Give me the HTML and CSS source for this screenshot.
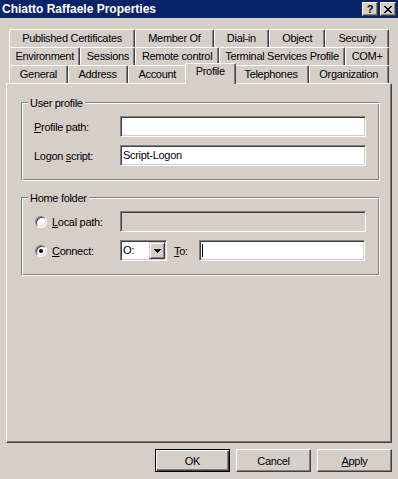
FILE: index.html
```html
<!DOCTYPE html>
<html lang="en">
<head>
    <meta charset="UTF-8">
    <meta name="viewport" content="width=device-width, initial-scale=1.0">
    <title>Chiatto Raffaele Properties</title>
    <link rel="stylesheet" href="styles.css">
</head>
<body>
    <div class="dialog">
        <div class="titlebar">
            <span class="title">Chiatto Raffaele Properties</span>
            <div class="caption-btns">
                <div class="caption-btn help">?</div>
                <div class="caption-btn">
                    <svg width="8" height="7" viewBox="0 0 8 7" shape-rendering="crispEdges"><path d="M0 0h2v1H0z M6 0h2v1H6z M1 1h2v1H1z M5 1h2v1H5z M2 2h4v1H2z M3 3h2v1H3z M2 4h4v1H2z M1 5h2v1H1z M5 5h2v1H5z M0 6h2v1H0z M6 6h2v1H6z" fill="#000"/></svg>
                </div>
            </div>
        </div>

        <div class="client">
            <div class="tabs">
                <div class="tab-row">
                    <div class="tab">Published Certificates</div>
                    <div class="tab">Member Of</div>
                    <div class="tab">Dial-in</div>
                    <div class="tab">Object</div>
                    <div class="tab">Security</div>
                </div>
                <div class="tab-row">
                    <div class="tab">Environment</div>
                    <div class="tab">Sessions</div>
                    <div class="tab">Remote control</div>
                    <div class="tab">Terminal Services Profile</div>
                    <div class="tab">COM+</div>
                </div>
                <div class="tab-row">
                    <div class="tab">General</div>
                    <div class="tab">Address</div>
                    <div class="tab">Account</div>
                    <div class="tab active">Profile</div>
                    <div class="tab">Telephones</div>
                    <div class="tab">Organization</div>
                </div>
            </div>

            <div class="panel">
                <fieldset class="group">
                    <legend>User profile</legend>
                    <div class="field-row">
                        <label class="field-label"><u>P</u>rofile path:</label>
                        <div class="edit"></div>
                    </div>
                    <div class="field-row">
                        <label class="field-label">Logon <u>s</u>cript:</label>
                        <div class="edit">Script-Logon</div>
                    </div>
                </fieldset>

                <fieldset class="group">
                    <legend>Home folder</legend>
                    <div class="field-row">
                        <div class="radio-label"><span class="radio"></span><u>L</u>ocal path:</div>
                        <div class="edit disabled"></div>
                    </div>
                    <div class="field-row">
                        <div class="radio-label"><span class="radio checked"></span><u>C</u>onnect:</div>
                        <div class="combo">
                            <span class="combo-text">O:</span>
                            <span class="combo-btn">
                                <svg width="7" height="4" viewBox="0 0 7 4" shape-rendering="crispEdges"><path d="M0 0h7v1H0z M1 1h5v1H1z M2 2h3v1H2z M3 3h1v1H3z" fill="#000"/></svg>
                            </span>
                        </div>
                        <span class="to-label"><u>T</u>o:</span>
                        <div class="edit to"><span class="caret"></span></div>
                    </div>
                </fieldset>
            </div>

            <div class="buttons">
                <button class="btn default">OK</button>
                <button class="btn">Cancel</button>
                <button class="btn"><u>A</u>pply</button>
            </div>
        </div>
    </div>
</body>
</html>
```

FILE: styles.css
```css
body {
    margin: 0;
    background: #d4d0c8;
    font-family: "Liberation Sans", Arial, sans-serif;
    font-size: 11px;
    letter-spacing: -0.3px;
    color: #000;
}
.dialog {
    width: 398px;
    height: 479px;
    background: #d4d0c8;
    overflow: hidden;
}
.titlebar {
    height: 18px;
    box-sizing: border-box;
    padding: 0 2px;
    background: #0a246a;
    display: flex;
    align-items: center;
    justify-content: space-between;
}
.title {
    color: #fff;
    font-weight: bold;
    font-size: 12px;
    letter-spacing: 0;
}
.caption-btns {
    display: flex;
    gap: 2px;
}
.caption-btn {
    width: 16px;
    height: 14px;
    box-sizing: border-box;
    background: #d4d0c8;
    border: 1px solid;
    border-color: #fff #404040 #404040 #fff;
    box-shadow: inset -1px -1px #808080;
    display: flex;
    align-items: center;
    justify-content: center;
}
.help {
    font-weight: bold;
    font-size: 11px;
    line-height: 1;
    letter-spacing: 0;
}
.client {
    padding: 11px 6px 0;
}
.tabs {
    padding: 0 3px;
}
.tab-row {
    display: flex;
    height: 18px;
}
.tab {
    flex: 1 1 auto;
    height: 18px;
    box-sizing: border-box;
    padding: 1px 3px 0;
    border: 1px solid;
    border-bottom: none;
    border-color: #fff #404040 transparent #fff;
    border-radius: 2px 2px 0 0;
    box-shadow: inset -1px 0 #808080;
    background: #d4d0c8;
    text-align: center;
    line-height: 15px;
    white-space: nowrap;
}
.tab.active {
    position: relative;
    height: 21px;
    margin: -2px -2px 0;
    padding-top: 0;
}
.panel {
    height: 360px;
    box-sizing: border-box;
    border: 1px solid;
    border-color: #fff #404040 #404040 #fff;
    box-shadow: inset -1px -1px #808080;
    padding: 11px 11px 0 14px;
}
.group {
    margin: 0 0 9px;
    padding: 6px 13px 14px 12px;
    min-width: 0;
    border: 1px solid;
    border-color: #808080 #fff #fff #808080;
    box-shadow: inset 1px 1px #fff, inset -1px -1px #808080;
}
.group legend {
    margin-left: -6px;
    padding: 2px 2px 0;
    line-height: 13px;
    background: #d4d0c8;
}
.field-row {
    display: flex;
    align-items: center;
}
.field-row + .field-row {
    margin-top: 8px;
}
.field-label {
    width: 86px;
    flex: none;
}
.edit {
    flex: 1;
    height: 21px;
    box-sizing: border-box;
    border: 1px solid;
    border-color: #808080 #fff #fff #808080;
    box-shadow: inset 1px 1px #404040, inset -1px -1px #d4d0c8;
    background: #fff;
    padding: 0 2px;
    line-height: 19px;
    white-space: nowrap;
    display: flex;
    align-items: center;
}
.edit.disabled {
    background: #d4d0c8;
}
.edit.to {
    margin-right: 1px;
}
.caret {
    width: 1px;
    height: 13px;
    background: #000;
}
.radio-label {
    width: 86px;
    flex: none;
    display: flex;
    align-items: center;
}
.radio {
    width: 12px;
    height: 12px;
    box-sizing: border-box;
    margin: 0 5px 0 1px;
    border-radius: 50%;
    background: #fff;
    border: 1px solid;
    border-color: #808080 #fff #fff #808080;
    box-shadow: inset 1px 1px #404040, inset -1px -1px #d4d0c8;
    display: flex;
    align-items: center;
    justify-content: center;
}
.radio.checked::after {
    content: "";
    width: 4px;
    height: 4px;
    border-radius: 50%;
    background: #000;
}
.combo {
    width: 47px;
    height: 21px;
    flex: none;
    box-sizing: border-box;
    padding: 1px;
    border: 1px solid;
    border-color: #808080 #fff #fff #808080;
    box-shadow: inset 1px 1px #404040, inset -1px -1px #d4d0c8;
    background: #fff;
    display: flex;
}
.combo-text {
    flex: 1;
    padding-left: 1px;
    line-height: 17px;
}
.combo-btn {
    width: 16px;
    height: 17px;
    box-sizing: border-box;
    background: #d4d0c8;
    border: 1px solid;
    border-color: #d4d0c8 #404040 #404040 #d4d0c8;
    box-shadow: inset 1px 1px #fff, inset -1px -1px #808080;
    display: flex;
    align-items: center;
    justify-content: center;
}
.to-label {
    width: 25px;
    flex: none;
    margin-left: 7px;
}
.buttons {
    display: flex;
    justify-content: flex-end;
    gap: 6px;
    padding-top: 6px;
}
.btn {
    width: 75px;
    height: 23px;
    box-sizing: border-box;
    padding: 0;
    font: inherit;
    letter-spacing: inherit;
    color: #000;
    background: #d4d0c8;
    border: 1px solid;
    border-color: #fff #404040 #404040 #fff;
    box-shadow: inset -1px -1px #808080;
}
.btn.default {
    border-color: #000;
    box-shadow: inset 1px 1px #fff, inset -1px -1px #404040, inset -2px -2px #808080;
}
```
